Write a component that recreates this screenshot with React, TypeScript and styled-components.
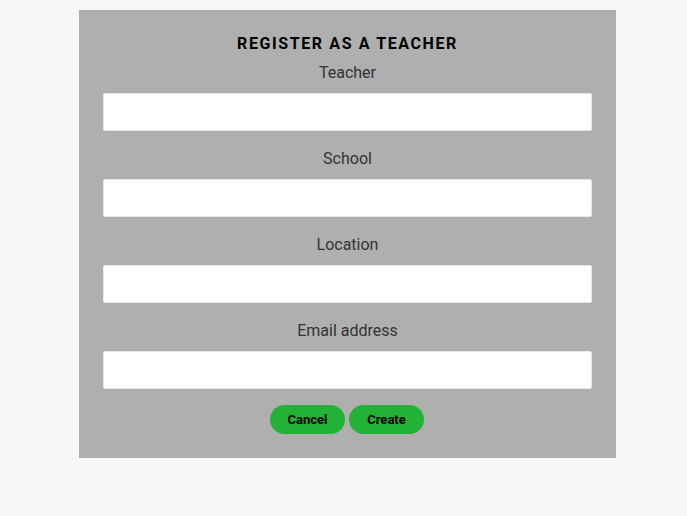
import React from "react";
import styled, { createGlobalStyle } from "styled-components";

const Global = createGlobalStyle`
  html, body { margin: 0; padding: 0; background: #f7f7f7; }
  body { font-family: Roboto, "Liberation Sans", sans-serif; }
`;

const Page = styled.div`
  padding: 10px 0 0 79px;
`;

const Card = styled.form`
  width: 537px;
  box-sizing: border-box;
  background: #afafaf;
  padding: 24px 24px 24px 24px;
  display: flex;
  flex-direction: column;
  align-items: stretch;
`;

const Title = styled.h1`
  margin: 0 0 10px;
  font-size: 16px;
  line-height: 19px;
  font-weight: 700;
  letter-spacing: 1.6px;
  text-align: center;
  color: #000;
`;

const Field = styled.div`
  display: flex;
  flex-direction: column;
  margin-bottom: 18px;
`;

const Label = styled.label`
  font-size: 16px;
  line-height: 19px;
  color: #333;
  text-align: center;
  margin-bottom: 11px;
`;

const Input = styled.input`
  height: 38px;
  box-sizing: border-box;
  border: 1px solid #e6e6ee;
  border-radius: 2px;
  background: #fff;
  outline: none;
  padding: 0 8px;
  font-family: inherit;
  font-size: 14px;
`;

const Actions = styled.div`
  display: flex;
  justify-content: center;
  gap: 4px;
  margin-top: -2px;
  padding-right: 1px;
`;

const Button = styled.button`
  width: 75px;
  height: 29px;
  border: none;
  border-radius: 15px;
  background: #22b236;
  color: #000;
  font-family: inherit;
  font-weight: 700;
  font-size: 13px;
  cursor: pointer;
`;

const fields = ["Teacher", "School", "Location", "Email address"];

export default function App() {
  return (
    <>
      <Global />
      <Page>
        <Card onSubmit={(e) => e.preventDefault()}>
          <Title>REGISTER AS A TEACHER</Title>
          {fields.map((f) => (
            <Field key={f}>
              <Label>{f}</Label>
              <Input type={f === "Email address" ? "email" : "text"} />
            </Field>
          ))}
          <Actions>
            <Button type="button">Cancel</Button>
            <Button type="submit">Create</Button>
          </Actions>
        </Card>
      </Page>
    </>
  );
}
